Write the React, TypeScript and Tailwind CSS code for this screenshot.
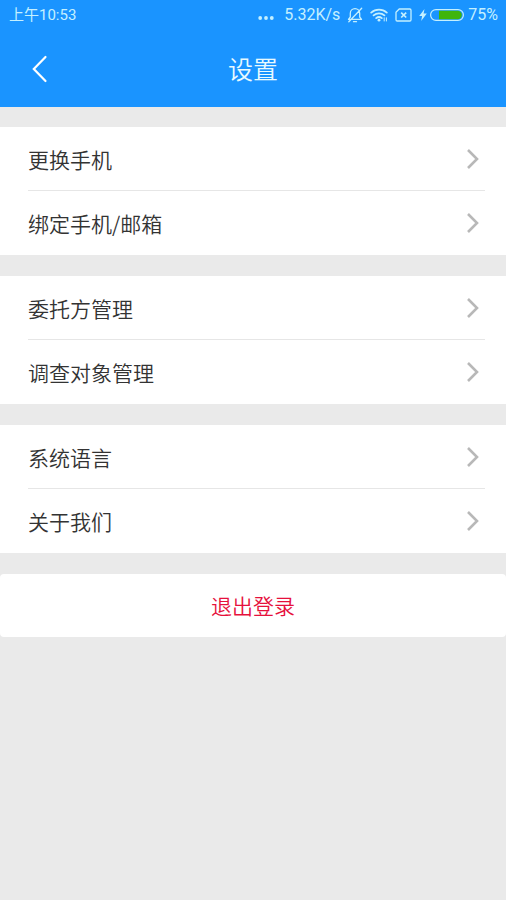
import React from 'react';

interface SettingGroup {
  id: string;
  items: string[];
}

const groups: SettingGroup[] = [
  { id: 'device', items: ['更换手机', '绑定手机/邮箱'] },
  { id: 'manage', items: ['委托方管理', '调查对象管理'] },
  { id: 'system', items: ['系统语言', '关于我们'] },
];

const StatusBar: React.FC = () => (
  <div className="flex h-[30px] items-center justify-between pl-[9px] pr-2 font-['Roboto','Noto_Sans_CJK_SC',sans-serif] font-normal text-[#c4f0ff]">
    <span className="text-[15px] leading-[30px]">上午10:53</span>
    <div className="flex items-center text-base leading-[30px]">
      {/* More notifications */}
      <svg className="mr-2.5 mt-[6px] h-1 w-4" viewBox="0 0 16 4" fill="currentColor">
        <circle cx="2.2" cy="2" r="1.9" />
        <circle cx="8" cy="2" r="1.9" />
        <circle cx="13.8" cy="2" r="1.9" />
      </svg>
      <span>5.32K/s</span>
      {/* Muted bell */}
      <svg className="ml-[7px] h-4 w-4" viewBox="0 0 16 16" fill="none" stroke="currentColor" strokeWidth="1.3" strokeLinecap="round" strokeLinejoin="round">
        <path d="M1.5 12.4h13L12.7 10V6.4a4.7 4.7 0 0 0-9.4 0V10ZM6.5 14.7h3M14.7 1.2 1.8 14.8" />
      </svg>
      {/* Wifi */}
      <svg className="ml-[7px] h-[14px] w-[18px]" viewBox="0 0 18 14" fill="none" stroke="currentColor" strokeWidth="1.8" strokeLinecap="round">
        <path d="M1.2 4.6a11.8 11.8 0 0 1 15.6 0M3.6 7.4a8 8 0 0 1 10.8 0M6.2 10.1a4.4 4.4 0 0 1 5.6 0" />
        <circle cx="9" cy="12.2" r="1.4" fill="currentColor" stroke="none" />
        <path d="M14.2 13V9.8M16.4 9.8V13" strokeWidth="1" />
      </svg>
      {/* No sim card */}
      <svg className="ml-[7px] h-[14px] w-[17px]" viewBox="0 0 17 14" fill="none" stroke="currentColor" strokeWidth="1.3" strokeLinejoin="round">
        <path d="M4.2 1h10.6a1.2 1.2 0 0 1 1.2 1.2v9.6a1.2 1.2 0 0 1-1.2 1.2H2.2A1.2 1.2 0 0 1 1 11.8V4.2Z" />
        <path d="m6.2 4.7 5 4.8M11.2 4.7l-5 4.8" strokeWidth="1.7" />
      </svg>
      {/* Charging battery */}
      <svg className="ml-[7px] h-3 w-2" viewBox="0 0 8 12" fill="currentColor">
        <path d="M5.5 0 .2 6.9h2.9L2.2 12l5.6-7.4H4.6Z" />
      </svg>
      <svg className="ml-[3px] h-3 w-[34px]" viewBox="0 0 34 12">
        <rect x=".6" y=".6" width="32.8" height="10.8" rx="5.4" fill="none" stroke="currentColor" strokeWidth="1.2" />
        <path d="M9 1.8h18.6a4.2 4.2 0 0 1 0 8.4H9Z" fill="#3fb50c" />
      </svg>
      <span className="ml-1">75%</span>
    </div>
  </div>
);

const SettingRow: React.FC<{ label: string }> = ({ label }) => (
  <li className="group pl-7 pr-[21px]">
    <button
      type="button"
      className="flex h-16 w-full items-center justify-between border-b border-[#e6e6e6] pr-1.5 text-left text-[21px] text-[#333] group-last:border-b-0"
    >
      <span className="pt-0.5">{label}</span>
      <svg className="h-5 w-3" viewBox="0 0 12 20" fill="none" stroke="#b8b8b8" strokeWidth="2.6">
        <path d="m1 1 9 9-9 9" />
      </svg>
    </button>
  </li>
);

export default function App() {
  return (
    <div className="min-h-screen bg-[#eaeaea] font-['Noto_Sans_CJK_SC',sans-serif] font-[350]">
      <header className="bg-[#1a94ff]">
        <StatusBar />
        <div className="grid h-[77px] grid-cols-[1fr_auto_1fr] items-center">
          <button type="button" aria-label="返回" className="ml-6 flex h-12 w-8 items-center justify-center justify-self-start">
            <svg className="h-7 w-4" viewBox="0 0 16 28" fill="none" stroke="#fff" strokeWidth="2.2" strokeLinecap="round">
              <path d="M13.5 2 1.8 14l11.7 12" />
            </svg>
          </button>
          <h1 className="text-[25px] font-[350] text-[#e8faff]">设置</h1>
        </div>
      </header>

      <main className="flex flex-col gap-[21px] pt-5">
        {groups.map(group => (
          <ul key={group.id} className="bg-white">
            {group.items.map(item => (
              <SettingRow key={item} label={item} />
            ))}
          </ul>
        ))}

        <button type="button" className="h-[63px] w-full rounded bg-white text-[21px] text-[#e6103c]">
          退出登录
        </button>
      </main>
    </div>
  );
}
